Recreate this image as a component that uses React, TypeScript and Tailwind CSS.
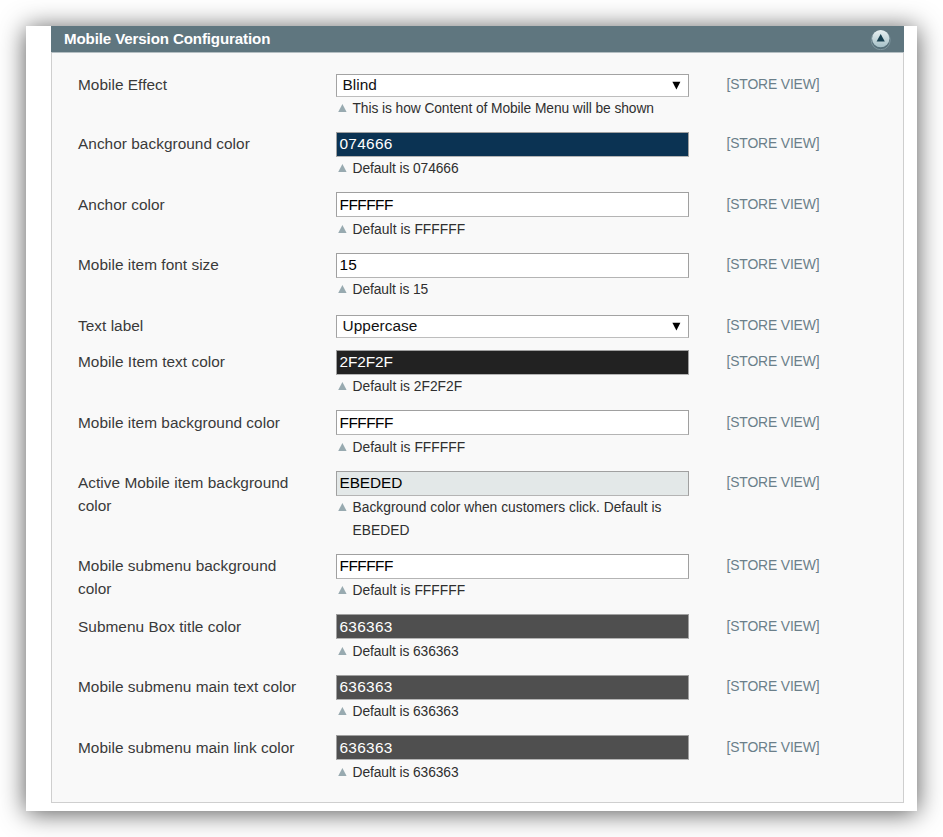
type Field = {
  label: string;
  value: string;
  hint?: string;
  select?: boolean;
  low?: boolean;
  row: string;
  box?: string;
  track?: string;
  hintTrack?: string;
};

const white = "bg-white text-black";
const gray = "bg-[#4f4f4f] text-white";

const fields: Field[] = [
  { label: "Mobile Effect", value: "Blind", select: true, hint: "This is how Content of Mobile Menu will be shown", row: "h-[59px]", hintTrack: "tracking-[-0.08px]" },
  { label: "Anchor background color", value: "074666", hint: "Default is 074666", row: "h-[60px]", box: "bg-[#0b3353] text-white", track: "tracking-[0.3px]", hintTrack: "tracking-[-0.08px]" },
  { label: "Anchor color", value: "FFFFFF", low: true, hint: "Default is FFFFFF", row: "h-[61px]", box: white, track: "tracking-[-0.5px]", hintTrack: "tracking-[0.05px]" },
  { label: "Mobile item font size", value: "15", hint: "Default is 15", row: "h-[61px]", box: white, track: "tracking-[0.3px]", hintTrack: "tracking-[-0.08px]" },
  { label: "Text label", value: "Uppercase", select: true, row: "h-9" },
  { label: "Mobile Item text color", value: "2F2F2F", hint: "Default is 2F2F2F", row: "h-[60px]", box: "bg-[#222222] text-white", track: "tracking-[-0.1px]" },
  { label: "Mobile item background color", value: "FFFFFF", low: true, hint: "Default is FFFFFF", row: "h-[61px]", box: white, track: "tracking-[-0.5px]", hintTrack: "tracking-[0.05px]" },
  { label: "Active Mobile item background color", value: "EBEDED", hint: "Background color when customers click. Default is EBEDED", row: "h-[83px]", box: "bg-[#e3e8e8] text-black", track: "tracking-[-0.1px]", hintTrack: "tracking-[0.03px]" },
  { label: "Mobile submenu background color", value: "FFFFFF", hint: "Default is FFFFFF", row: "h-[60px]", box: white, track: "tracking-[-0.5px]", hintTrack: "tracking-[0.05px]" },
  { label: "Submenu Box title color", value: "636363", low: true, hint: "Default is 636363", row: "h-[61px]", box: gray, track: "tracking-[0.3px]", hintTrack: "tracking-[-0.08px]" },
  { label: "Mobile submenu main text color", value: "636363", hint: "Default is 636363", row: "h-[60px]", box: gray, track: "tracking-[0.3px]", hintTrack: "tracking-[-0.08px]" },
  { label: "Mobile submenu main link color", value: "636363", low: true, hint: "Default is 636363", row: "h-[60px]", box: gray, track: "tracking-[0.3px]", hintTrack: "tracking-[-0.08px]" },
];

function SelectBox({ value }: { value: string }) {
  return (
    <div className="mt-px flex h-[23px] items-center justify-between border border-[#a3a3a3] border-b-[#bdbdbd] bg-white pr-[7px] pl-[5.5px] text-[15.4px] leading-[21px] tracking-[0.05px] text-[#111]">
      <span className="-mt-[3px]">{value}</span>
      <svg width="9" height="9" viewBox="0 0 9 9">
        <path d="M0.4 0.7H8.4L4.4 8.5Z" fill="#000" />
      </svg>
    </div>
  );
}

function FieldRow({ f }: { f: Field }) {
  return (
    <div className={`flex items-start ${f.row}`}>
      <div className={`w-[258px] shrink-0 pr-8 text-[15.4px] leading-[23px] tracking-[0.03px] text-[#3a3a3a] ${f.low ? "pt-px" : ""}`}>
        {f.label}
      </div>
      <div className="w-[353px] shrink-0">
        {f.select ? (
          <SelectBox value={f.value} />
        ) : (
          <div className={`h-[25px] border border-[#a0a0a0] border-b-[#b4b4b4] pl-[2.5px] text-[15.4px] ${f.low ? "leading-[23px]" : "leading-[21px]"} ${f.box} ${f.track ?? ""}`}>
            {f.value}
          </div>
        )}
        {f.hint && (
          <div className={`flex items-start pl-[2px] ${f.low ? "pt-px" : ""}`}>
            <svg className="mt-[7px] mr-[5.5px] shrink-0" width="9" height="8" viewBox="0 0 9 8">
              <path d="M4.4 0L8.6 8H0.2Z" fill="#98aab0" />
            </svg>
            <span className={`text-[13.8px] leading-[23px] text-[#2f2f2f] ${f.hintTrack ?? ""}`}>{f.hint}</span>
          </div>
        )}
      </div>
      <div className={`pl-[37.5px] text-[13.9px] leading-[23px] tracking-[-0.15px] whitespace-nowrap text-[#6b7f8a] ${f.low ? "pt-px" : ""}`}>
        [STORE VIEW]
      </div>
    </div>
  );
}

export default function App() {
  return (
    <div className="h-[837px] w-[943px] overflow-hidden bg-white pt-[26px] pl-[26px] font-['Liberation_Sans',Arial,sans-serif]">
      <div className="h-[785px] w-[891px] bg-white pl-[25px] shadow-[0_2px_24px_rgba(0,0,0,0.67)]">
        <div className="flex h-[26px] w-[853px] items-start justify-between bg-[#5f767f] pr-[13px] pl-[13px]">
          <h1 className="text-[15.1px] leading-[26px] font-bold tracking-[-0.12px] text-white">Mobile Version Configuration</h1>
          <svg className="mt-[3px]" width="21" height="21" viewBox="0 0 21 21">
            <defs>
              <linearGradient id="knob" x1="0" y1="0" x2="0" y2="1">
                <stop offset="0" stopColor="#e9f1f2" />
                <stop offset="1" stopColor="#a5c0c7" />
              </linearGradient>
            </defs>
            <circle cx="10.7" cy="11.2" r="9.5" fill="#56707a" stroke="#7e959d" strokeWidth="1" />
            <circle cx="10.7" cy="9.6" r="8.7" fill="url(#knob)" />
            <path d="M10.7 5L14.8 12.6H6.6Z" fill="#173f4f" />
          </svg>
        </div>
        <div className="h-[751px] w-[853px] border border-[#cfcfcf] border-t-[#b5bfc3] bg-[#f9f9f9] pt-5 pl-[26px]">
          {fields.map((f) => (
            <FieldRow key={f.label} f={f} />
          ))}
        </div>
      </div>
    </div>
  );
}
